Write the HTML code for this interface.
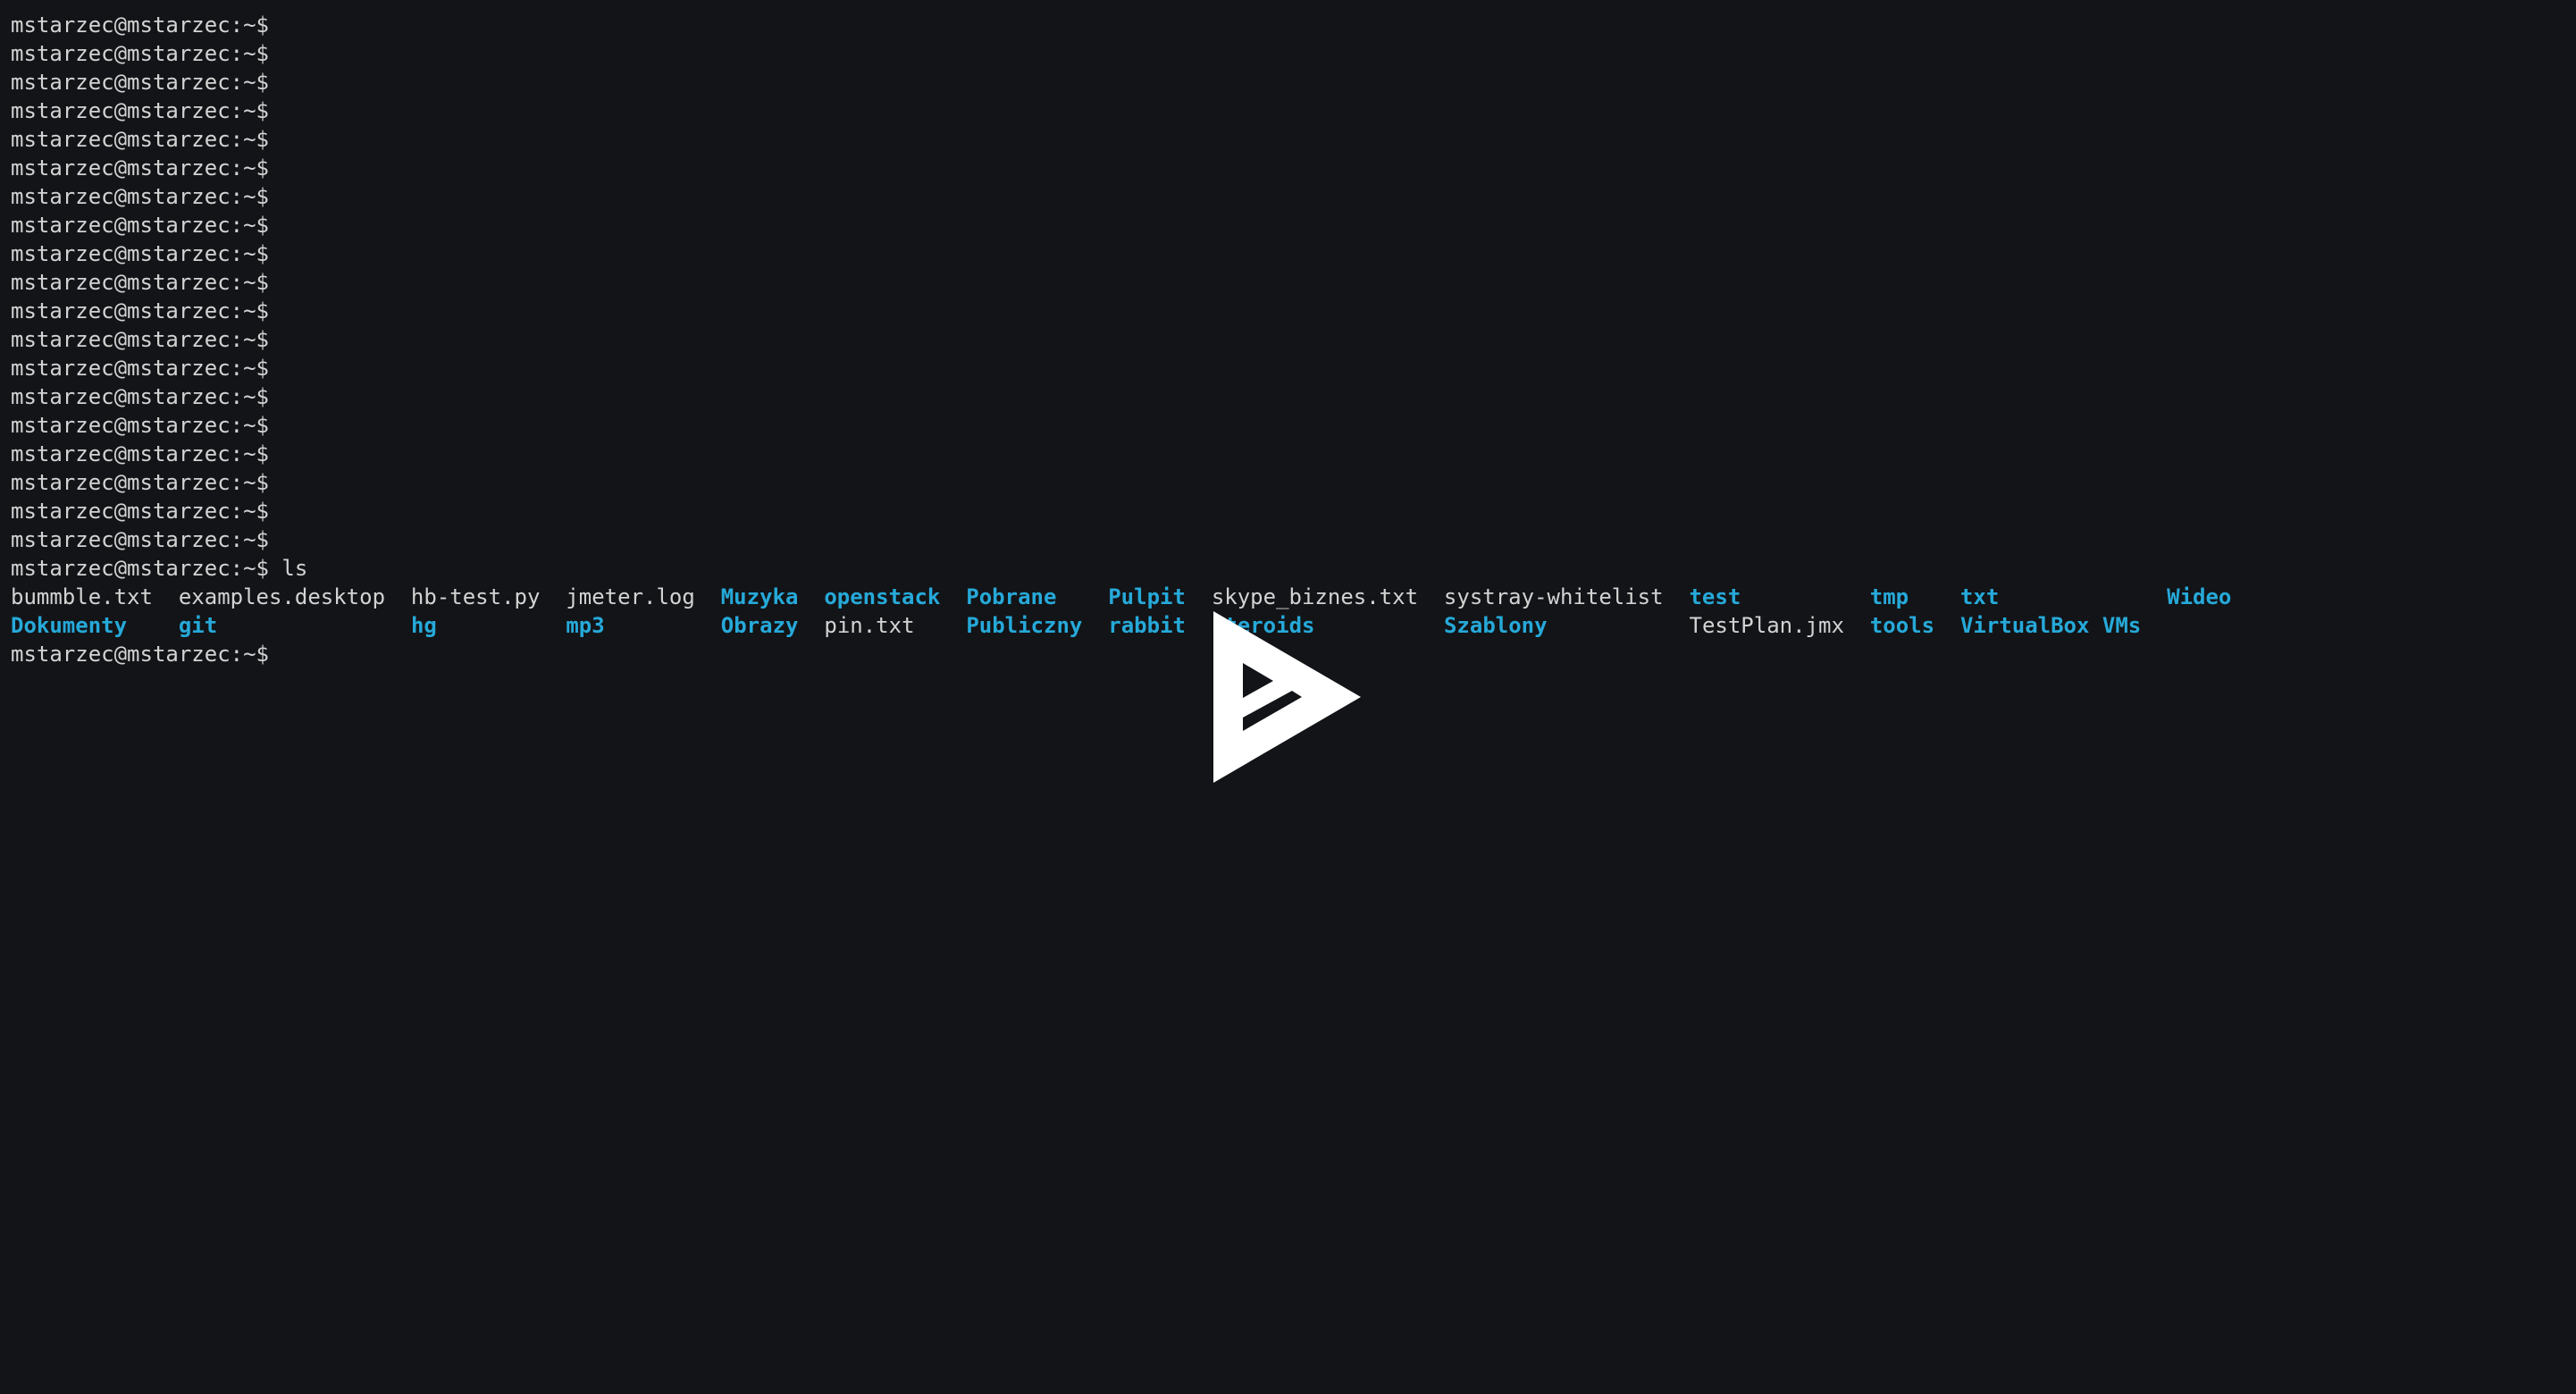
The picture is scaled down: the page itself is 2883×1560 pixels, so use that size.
<!DOCTYPE html>
<html><head><meta charset="utf-8"><style>
html,body{margin:0;padding:0;background:#121417;width:2883px;height:1560px;overflow:hidden}
pre{margin:0;position:absolute;left:12px;top:12px;font-family:"DejaVu Sans Mono","Liberation Mono",monospace;font-size:24px;line-height:32px;color:#d3d3d3}
b{color:#26a9d9;font-weight:bold}
svg{position:absolute;left:0;top:0}
</style></head><body>
<pre>mstarzec@mstarzec:~$
mstarzec@mstarzec:~$
mstarzec@mstarzec:~$
mstarzec@mstarzec:~$
mstarzec@mstarzec:~$
mstarzec@mstarzec:~$
mstarzec@mstarzec:~$
mstarzec@mstarzec:~$
mstarzec@mstarzec:~$
mstarzec@mstarzec:~$
mstarzec@mstarzec:~$
mstarzec@mstarzec:~$
mstarzec@mstarzec:~$
mstarzec@mstarzec:~$
mstarzec@mstarzec:~$
mstarzec@mstarzec:~$
mstarzec@mstarzec:~$
mstarzec@mstarzec:~$
mstarzec@mstarzec:~$
mstarzec@mstarzec:~$ ls
bummble.txt  examples.desktop  hb-test.py  jmeter.log  <b>Muzyka</b>  <b>openstack</b>  <b>Pobrane</b>    <b>Pulpit</b>  skype_biznes.txt  systray-whitelist  <b>test</b>          <b>tmp</b>    <b>txt</b>             <b>Wideo</b>
<b>Dokumenty</b>    <b>git</b>               <b>hg</b>          <b>mp3</b>         <b>Obrazy</b>  pin.txt    <b>Publiczny</b>  <b>rabbit</b>  <b>steroids</b>          <b>Szablony</b>           TestPlan.jmx  <b>tools</b>  <b>VirtualBox VMs</b>
mstarzec@mstarzec:~$</pre>
<svg width="2883" height="1560" viewBox="0 0 2883 1560">
<path fill="#fff" fill-rule="evenodd" d="M1358 684 L1523 780 L1358 876 Z M1391 742 L1425 762 L1391 781 Z M1391 803 L1446 773 L1457 780 L1391 818 Z"/>
</svg>
</body></html>
